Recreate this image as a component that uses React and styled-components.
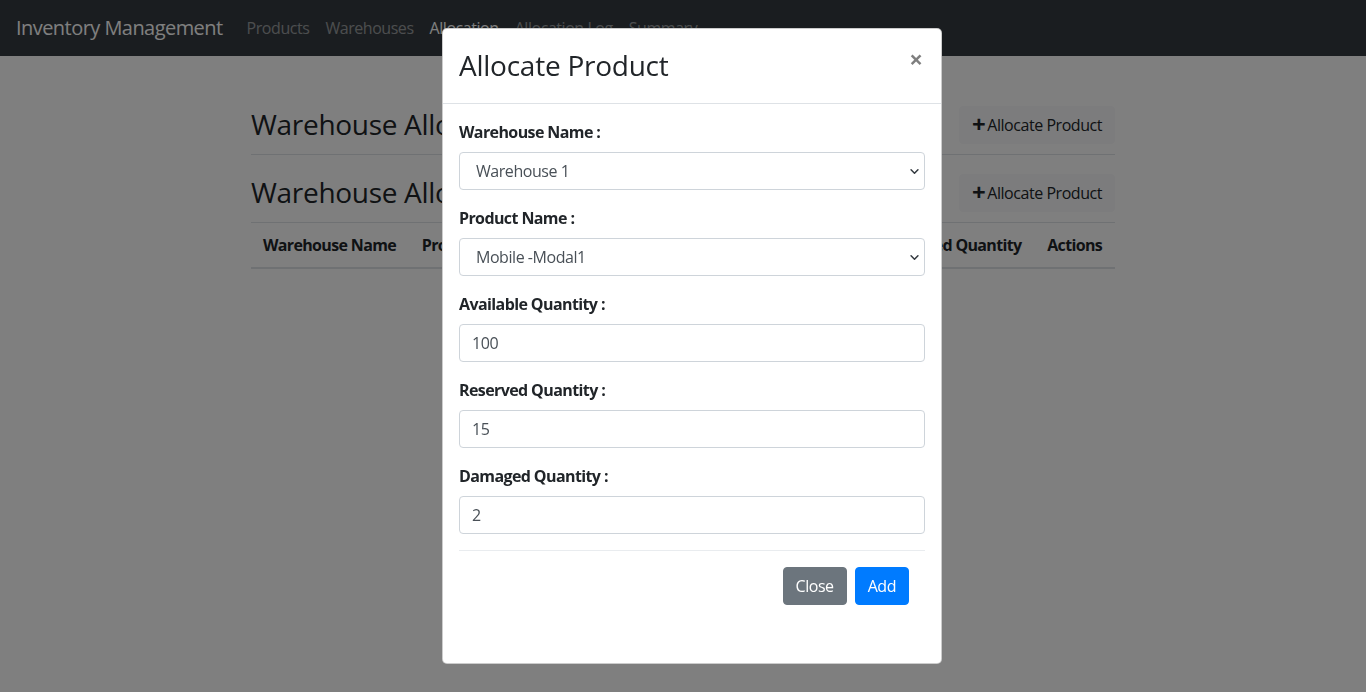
import React from "react";
import styled, { createGlobalStyle } from "styled-components";

const GlobalStyle = createGlobalStyle`
    * {
        box-sizing: border-box;
    }
    body {
        margin: 0;
        font-family: "Open Sans", "Noto Sans", sans-serif;
        font-size: 16px;
        line-height: 1.5;
        letter-spacing: -0.45px;
        color: #212529;
        background-color: #ffffff;
    }
`;

const fields = [
    { label: "Warehouse Name :", type: "select", value: "Warehouse 1" },
    { label: "Product Name :", type: "select", value: "Mobile -Modal1" },
    { label: "Available Quantity :", type: "input", value: "100" },
    { label: "Reserved Quantity :", type: "input", value: "15" },
    { label: "Damaged Quantity :", type: "input", value: "2" },
];

const columns = ["Warehouse Name", "Product Name", "Available Quantity", "Reserved Quantity", "Damaged Quantity", "Actions"];

export default function App() {
    return (
        <>
            <GlobalStyle />
            <Navbar>
                <Brand>Inventory Management</Brand>
                <NavLinks>
                    <NavLink>Products</NavLink>
                    <NavLink>Warehouses</NavLink>
                    <NavLink active>Allocation</NavLink>
                    <NavLink>Allocation Log</NavLink>
                    <NavLink>Summary</NavLink>
                </NavLinks>
            </Navbar>

            <Container>
                <HeaderRow>
                    <PageTitle>Warehouse Allocation</PageTitle>
                    <LightButton><Plus>+</Plus>Allocate Product</LightButton>
                </HeaderRow>
                <HeaderRow>
                    <PageTitle>Warehouse Allocation</PageTitle>
                    <LightButton><Plus>+</Plus>Allocate Product</LightButton>
                </HeaderRow>
                <Table>
                    <thead>
                        <tr>
                            {columns.map((c) => <Th key={c}>{c}</Th>)}
                        </tr>
                    </thead>
                </Table>
            </Container>

            <Backdrop />

            <ModalWrap>
                <ModalContent>
                    <ModalHeader>
                        <ModalTitle>Allocate Product</ModalTitle>
                        <CloseX>×</CloseX>
                    </ModalHeader>
                    <ModalBody>
                        {fields.map((f) => (
                            <FormGroup key={f.label}>
                                <Label>{f.label}</Label>
                                {f.type === "select" ? (
                                    <SelectWrap>
                                        <Select defaultValue={f.value}>
                                            <option>{f.value}</option>
                                        </Select>
                                        <Chevron viewBox="0 0 16 16">
                                            <path d="M3 5.5 L8 10.5 L13 5.5" fill="none" stroke="#343a40" strokeWidth="2.2" strokeLinecap="round" strokeLinejoin="round" />
                                        </Chevron>
                                    </SelectWrap>
                                ) : (
                                    <Input defaultValue={f.value} />
                                )}
                            </FormGroup>
                        ))}
                        <Footer>
                            <Button color="#6c757d">Close</Button>
                            <Button color="#007bff">Add</Button>
                        </Footer>
                    </ModalBody>
                </ModalContent>
            </ModalWrap>
        </>
    );
}

const Navbar = styled.nav`
    height: 56px;
    background-color: #343a40;
    display: flex;
    align-items: center;
    padding: 0 16px;
`;

const Brand = styled.div`
    color: #ffffff;
    font-size: 20px;
    letter-spacing: -0.55px;
    margin-right: 16px;
    line-height: 30px;
    padding: 5px 0;
`;

const NavLinks = styled.div`
    display: flex;
    align-items: center;
`;

const NavLink = styled.a`
    color: ${props => props.active ? '#ffffff' : 'rgba(255,255,255,0.5)'};
    padding: 8px;
    font-size: 16px;
    cursor: pointer;
`;

const Container = styled.div`
    width: 864px;
    margin: 31px auto 0;
`;

const HeaderRow = styled.div`
    display: flex;
    align-items: center;
    justify-content: space-between;
    padding: 19px 0 10px;
    border-bottom: 1px solid #dee2e6;
`;

const PageTitle = styled.h3`
    margin: 0;
    font-size: 28px;
    font-weight: 400;
    letter-spacing: -0.3px;
    line-height: 1.2;
`;

const LightButton = styled.button`
    height: 38px;
    padding: 6px 12px;
    border: 1px solid #f8f9fa;
    border-radius: 4px;
    background-color: #f8f9fa;
    color: #212529;
    font-family: inherit;
    font-size: 16px;
    letter-spacing: -0.45px;
    display: flex;
    align-items: center;
`;

const Plus = styled.span`
    font-size: 24px;
    font-weight: 700;
    line-height: 1;
    margin: -3px 2px 0 0;
`;

const Table = styled.table`
    width: 100%;
    border-collapse: collapse;
`;

const Th = styled.th`
    text-align: left;
    padding: 10px 12px;
    border-bottom: 2px solid #dee2e6;
    white-space: nowrap;
    font-weight: 700;
    letter-spacing: -0.65px;
`;

const Backdrop = styled.div`
    position: fixed;
    inset: 0;
    background-color: rgba(0, 0, 0, 0.5);
`;

const ModalWrap = styled.div`
    position: fixed;
    inset: 0;
    display: flex;
    justify-content: center;
    align-items: flex-start;
    padding: 28px 0 0 18px;
`;

const ModalContent = styled.div`
    width: 500px;
    background-color: #ffffff;
    border: 1px solid rgba(0, 0, 0, 0.2);
    border-radius: 5px;
`;

const ModalHeader = styled.div`
    display: flex;
    align-items: flex-start;
    justify-content: space-between;
    padding: 16px;
    border-bottom: 1px solid #dee2e6;
`;

const ModalTitle = styled.h3`
    margin: 4px 0 4px;
    font-size: 28px;
    font-weight: 400;
    letter-spacing: -0.25px;
    line-height: 1.2;
`;

const CloseX = styled.button`
    border: none;
    background: transparent;
    padding: 18px 18px 16px 16px;
    margin: -16px -16px -16px auto;
    font-family: inherit;
    font-size: 24px;
    font-weight: 700;
    line-height: 1;
    color: #000000;
    opacity: 0.5;
`;

const ModalBody = styled.div`
    padding: 16px 16px 42px;
`;

const FormGroup = styled.div`
    margin-bottom: 16px;
`;

const Label = styled.label`
    display: block;
    font-weight: 700;
    letter-spacing: -0.6px;
    margin-bottom: 8px;
`;

const SelectWrap = styled.div`
    position: relative;
`;

const Select = styled.select`
    width: 100%;
    height: 38px;
    padding: 6px 12px 6px 16px;
    border: 1px solid #ced4da;
    border-radius: 4px;
    background-color: #ffffff;
    color: #495057;
    font-family: inherit;
    font-size: 16px;
    letter-spacing: -0.45px;
    appearance: none;
`;

const Chevron = styled.svg`
    position: absolute;
    right: 5px;
    top: 14px;
    width: 11px;
    height: 11px;
    pointer-events: none;
`;

const Input = styled.input`
    width: 100%;
    height: 38px;
    padding: 6px 12px;
    border: 1px solid #ced4da;
    border-radius: 4px;
    color: #495057;
    font-family: inherit;
    font-size: 16px;
    letter-spacing: -0.45px;
`;

const Footer = styled.div`
    display: flex;
    justify-content: flex-end;
    gap: 8px;
    padding: 16px;
    border-top: 1px solid #e9ecef;
`;

const Button = styled.button`
    height: 38px;
    padding: 6px 12px;
    border: 1px solid ${props => props.color};
    border-radius: 4px;
    background-color: ${props => props.color};
    color: #ffffff;
    font-family: inherit;
    font-size: 16px;
    letter-spacing: -0.45px;
`;
